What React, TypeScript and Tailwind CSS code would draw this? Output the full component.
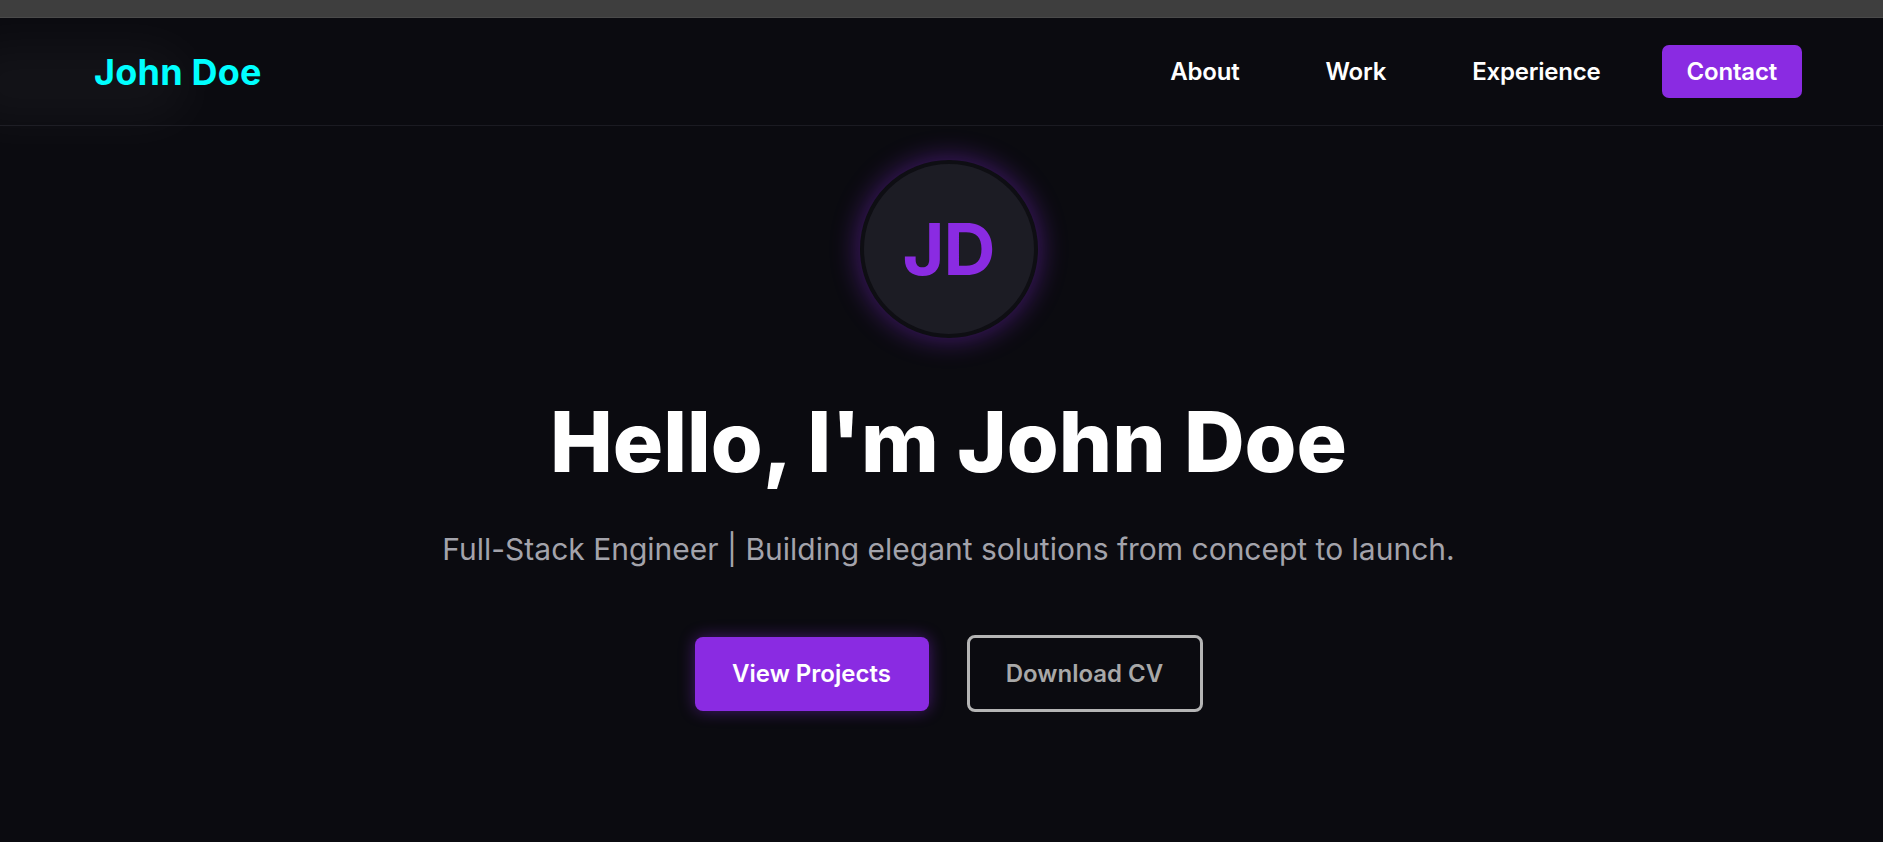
import React from "react";

export default function App() {
  return (
    <div
      className="min-h-[842px] w-full bg-[#0b0b10] text-white overflow-hidden"
      style={{ fontFamily: "Inter, 'Noto Sans', sans-serif" }}
    >
      <div className="h-[18px] bg-[#3e3e3e] border-b border-[#4a4a4a]" />
      <header className="relative h-[108px] border-b border-[#1b1b22] flex items-center justify-between pl-[94px] pr-[81px]">
        <div className="pointer-events-none absolute left-[-40px] top-[28px] h-[76px] w-[230px] rounded-full bg-white/[0.035] blur-xl" />
        <a className="relative text-[36px] leading-none font-bold text-[#00ffff] tracking-[0.2px]">John Doe</a>
        <nav className="flex items-center gap-[36px]">
          <a className="px-[25px] text-[24px] leading-[28px] font-semibold text-white tracking-[-0.2px]">About</a>
          <a className="px-[25px] text-[24px] leading-[28px] font-semibold text-white tracking-[-0.2px]">Work</a>
          <a className="px-[25px] text-[24px] leading-[28px] font-semibold text-white tracking-[-0.2px]">Experience</a>
          <a className="px-[25px] py-[12.5px] rounded-[7px] bg-[#8a2be2] text-[24px] leading-[28px] font-semibold text-white tracking-[-0.2px]">
            Contact
          </a>
        </nav>
      </header>
      <main className="flex flex-col items-center pt-[34px] pl-[14px]">
        <div className="flex h-[178px] w-[178px] items-center justify-center rounded-full border-[4px] border-[#0e0e13] bg-[#1c1c24] shadow-[0_0_26px_3px_rgba(138,43,226,0.4)]">
          <span className="text-[72px] leading-none font-bold text-[#8a2be2] tracking-[-1px]">JD</span>
        </div>
        <h1 className="mt-[62px] text-[84px] leading-[84px] font-extrabold text-white">
          Hello, I'm John Doe
        </h1>
        <p className="mt-[50px] text-[30px] leading-[30px] font-normal text-[#a3a3ab]">
          Full-Stack Engineer | Building elegant solutions from concept to launch.
        </p>
        <div className="mt-[71px] flex items-center gap-[38px]">
          <button className="h-[74px] w-[234px] rounded-[8px] bg-[#8a2be2] text-[24px] font-semibold text-white shadow-[0_0_16px_rgba(138,43,226,0.45)]">
            View Projects
          </button>
          <button className="h-[77px] w-[236px] rounded-[8px] border-[3px] border-[#b5b5b5] bg-transparent text-[24px] font-semibold text-[#a8a8a8]">
            Download CV
          </button>
        </div>
      </main>
    </div>
  );
}
